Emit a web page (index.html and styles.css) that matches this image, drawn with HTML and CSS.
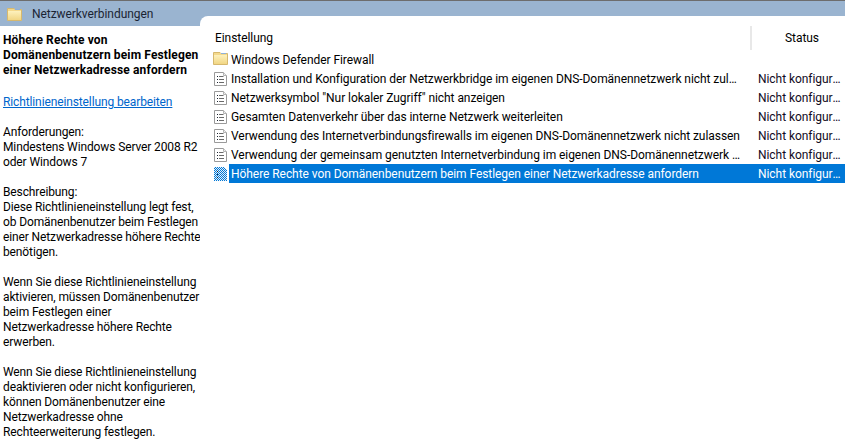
FILE: index.html
```html
<!DOCTYPE html>
<html lang="de">
<head>
<meta charset="utf-8">
<title>Netzwerkverbindungen</title>
<link rel="stylesheet" href="styles.css">
</head>
<body>
<svg class="defs" width="0" height="0" aria-hidden="true">
  <defs>
    <linearGradient id="fg" x1="0" y1="0" x2="0" y2="1"><stop offset="0" stop-color="#fdf1bd"/><stop offset="1" stop-color="#f1d684"/></linearGradient>
    <symbol id="folder" viewBox="0 0 16 16">
      <path d="M.5 1.500V13.500H14.500V2.500H8L7 1.500Z" fill="#f4d98c" stroke="#d6b86e"/>
      <rect x="1" y="4" width="13" height="9" fill="url(#fg)"/>
      <rect x="8" y="2" width="5" height="1" fill="#8fb0d8"/>
    </symbol>
    <symbol id="policy" viewBox="0 0 16 16">
      <path d="M1.500 2.500H10.500L13.500 5.500V15.500H1.500Z" fill="#fff" stroke="#9a9a9a"/>
      <path d="M10.500 2.500V5.500H13.500" fill="#eee" stroke="#b4b4b4"/>
      <path d="M4 6.500H5M4 9.500H5M4 12.500H5" stroke="#1c2430" fill="none"/>
      <path d="M6 6.500H10.500M6 9.500H11M6 12.500H11" stroke="#6a6a6a" fill="none"/>
    </symbol>
    <pattern id="dither" width="2" height="2" patternUnits="userSpaceOnUse">
      <rect width="2" height="2" fill="#e4f0fa"/>
      <rect width="1" height="1" fill="#0078d7"/>
      <rect x="1" y="1" width="1" height="1" fill="#0078d7"/>
    </pattern>
    <symbol id="policy-sel" viewBox="0 0 16 16">
      <path d="M1 2H11L14 5V16H1Z" fill="url(#dither)"/>
      <path d="M4 6.500H5M4 9.500H5M4 12.500H5" stroke="#10243c" fill="none"/>
    </symbol>
  </defs>
</svg>
<div class="window">
  <header class="titlebar">
    <svg class="icon title-icon"><use href="#folder"/></svg>
    <span class="title">Netzwerkverbindungen</span>
  </header>
  <div class="content">
    <aside class="desc">
      <h1 class="desc-title">Höhere Rechte von<br>Domänenbenutzern beim Festlegen<br>einer Netzwerkadresse anfordern</h1>
      <p class="edit"><a href="#">Richtlinieneinstellung bearbeiten</a></p>
      <p>Anforderungen:<br>Mindestens Windows Server 2008 R2<br>oder Windows 7</p>
      <p>Beschreibung:<br>Diese Richtlinieneinstellung legt fest,<br>ob Domänenbenutzer beim Festlegen<br>einer Netzwerkadresse höhere Rechte<br>benötigen.</p>
      <p>Wenn Sie diese Richtlinieneinstellung<br>aktivieren, müssen Domänenbenutzer<br>beim Festlegen einer<br>Netzwerkadresse höhere Rechte<br>erwerben.</p>
      <p>Wenn Sie diese Richtlinieneinstellung<br>deaktivieren oder nicht konfigurieren,<br>können Domänenbenutzer eine<br>Netzwerkadresse ohne<br>Rechteerweiterung festlegen.</p>
    </aside>
    <main class="list">
      <div class="cols">
        <div class="col-name">Einstellung</div>
        <div class="col-status">Status</div>
      </div>
      <div class="row">
        <svg class="icon"><use href="#folder"/></svg>
        <span class="name">Windows Defender Firewall</span>
        <span class="state"></span>
      </div>
      <div class="row">
        <svg class="icon"><use href="#policy"/></svg>
        <span class="name">Installation und Konfiguration der Netzwerkbridge im eigenen DNS-Domänennetzwerk nicht zulassen</span>
        <span class="state">Nicht konfiguriert</span>
      </div>
      <div class="row">
        <svg class="icon"><use href="#policy"/></svg>
        <span class="name">Netzwerksymbol "Nur lokaler Zugriff" nicht anzeigen</span>
        <span class="state">Nicht konfiguriert</span>
      </div>
      <div class="row">
        <svg class="icon"><use href="#policy"/></svg>
        <span class="name">Gesamten Datenverkehr über das interne Netzwerk weiterleiten</span>
        <span class="state">Nicht konfiguriert</span>
      </div>
      <div class="row">
        <svg class="icon"><use href="#policy"/></svg>
        <span class="name">Verwendung des Internetverbindungsfirewalls im eigenen DNS-Domänennetzwerk nicht zulassen</span>
        <span class="state">Nicht konfiguriert</span>
      </div>
      <div class="row">
        <svg class="icon"><use href="#policy"/></svg>
        <span class="name">Verwendung der gemeinsam genutzten Internetverbindung im eigenen DNS-Domänennetzwerk verhindern</span>
        <span class="state">Nicht konfiguriert</span>
      </div>
      <div class="row selected">
        <svg class="icon"><use href="#policy-sel"/></svg>
        <span class="name">Höhere Rechte von Domänenbenutzern beim Festlegen einer Netzwerkadresse anfordern</span>
        <span class="state">Nicht konfiguriert</span>
      </div>
    </main>
  </div>
</div>
</body>
</html>
```
FILE: styles.css
```css
html, body {
  margin: 0;
  padding: 0;
  width: 845px;
  height: 448px;
  overflow: hidden;
  background: #fff;
}
.defs { position: absolute; }
.window {
  width: 845px;
  height: 448px;
  overflow: hidden;
  font: 12px/15px Roboto, sans-serif;
  letter-spacing: -0.06px;
  color: #000;
  display: flex;
  flex-direction: column;
}
.titlebar {
  flex: none;
  height: 25px;
  border-top: 1px solid #6d6d6d;
  background: #9ab4d0;
  display: flex;
  align-items: center;
  padding-left: 7px;
  gap: 9px;
}
.icon { width: 16px; height: 16px; flex: none; }
.title-icon { align-self: flex-start; margin-top: 6px; }
.title { color: #1a2433; padding-top: 2px; }
.content {
  flex: 1;
  display: flex;
  min-height: 0;
}
.desc {
  width: 200px;
  flex: none;
  padding: 7px 0 0 3px;
  box-sizing: border-box;
  white-space: nowrap;
  letter-spacing: -0.12px;
}
.desc-title {
  margin: 0 0 17px;
  font: bold 12px/15px Roboto, sans-serif;
  letter-spacing: 0.13px;
}
.desc p { margin: 0 0 15px; }
.edit a { color: #0066cc; }
.list {
  flex: 1;
  min-width: 0;
  margin-top: -10px;
  background: #fff;
  border-top-left-radius: 8px;
}
.cols {
  display: flex;
  height: 34px;
  padding-top: 10px;
  box-sizing: border-box;
}
.col-name {
  width: 552px;
  padding: 5px 0 0 15px;
  box-sizing: border-box;
  border-right: 2px solid #e8e8e8;
}
.col-status {
  flex: 1;
  padding: 5px 0 0 33px;
}
.row {
  display: flex;
  height: 19px;
  padding-left: 13px;
}
.row .icon { margin-top: 1px; }
.name {
  width: 515px;
  flex: none;
  padding: 3px 2px 0;
  margin-right: 14px;
  overflow: hidden;
  white-space: nowrap;
  text-overflow: ellipsis;
  box-sizing: border-box;
}
.state {
  flex: 1;
  min-width: 0;
  padding: 3px 2px 0 0;
  overflow: hidden;
  white-space: nowrap;
  text-overflow: ellipsis;
  color: #120a1e;
}
.selected .name,
.selected .state {
  color: #fff;
  background: #0078d7;
}
.selected .name {
  margin-right: 0;
  width: 529px;
}
```
